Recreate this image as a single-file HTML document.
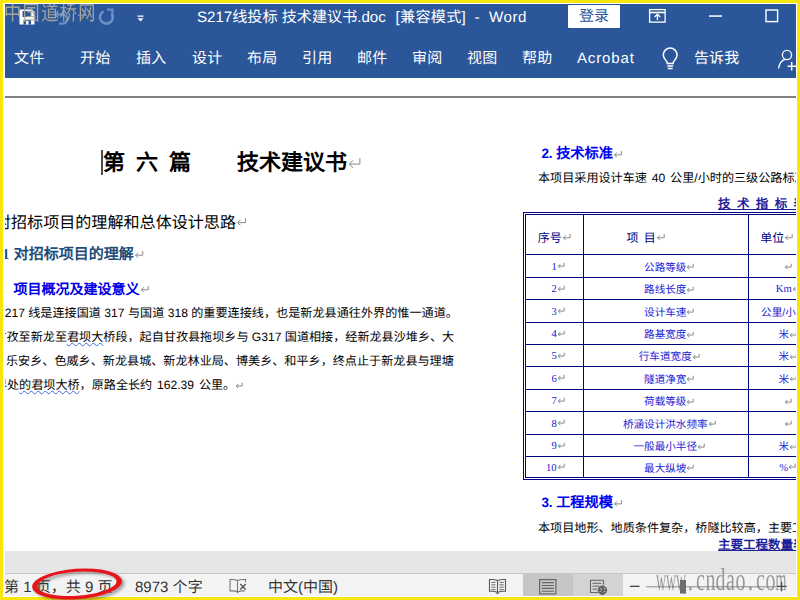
<!DOCTYPE html>
<html lang="zh-CN">
<head>
<meta charset="utf-8">
<title>S217线投标 技术建议书.doc [兼容模式] - Word</title>
<style>
html,body{margin:0;padding:0;}
body{text-rendering:geometricPrecision;width:800px;height:600px;overflow:hidden;background:#f8e50c;position:relative;font-family:"Liberation Sans",sans-serif;}
#frame{position:absolute;left:3px;top:3px;width:794px;height:594px;background:#fff;}
#win{position:absolute;left:0;top:0;width:800px;height:600px;clip-path:inset(4px 4px 4px 5px);overflow:hidden;}
#titlebar{position:absolute;left:0;top:0;width:800px;height:78px;background:#2b579a;}
.tab{position:absolute;top:49.3px;font-size:15px;line-height:20px;color:#fff;white-space:nowrap;}
#ttl{position:absolute;left:197px;top:7.7px;font-size:15.1px;line-height:20px;white-space:nowrap;color:#fff;}
#login{position:absolute;left:568px;top:5px;width:52px;height:23px;background:#fff;color:#2b579a;font-size:15px;line-height:23px;text-align:center;border-radius:1px;}
#rule{position:absolute;left:0;top:96px;width:800px;height:2px;background:#808080;}
.t{position:absolute;white-space:nowrap;color:#000;line-height:20px;height:20px;}
.j{text-align:justify;text-align-last:justify;}
.sf{font-weight:bold;}
.sr{font-family:"Liberation Serif",serif;}
.pm{display:inline-block;width:.69em;height:.69em;vertical-align:0;margin-left:0;overflow:visible;}
.bd{font-size:12.1px;}
.sq{text-decoration:underline wavy #3a6de0;text-decoration-thickness:1.3px;text-underline-offset:1.3px;text-decoration-skip-ink:none;}
.nv{color:#1f1f99;}
.sn{font-family:"Liberation Sans",sans-serif;font-size:13.5px;letter-spacing:-.3px;}
.ln{position:absolute;background:#000080;}
.c{position:absolute;white-space:nowrap;color:#1a1ad6;font-size:10.6px;line-height:14px;height:14px;text-align:center;}
.c .pm,.h .pm{width:.8em;height:.8em;}
.h{position:absolute;white-space:nowrap;color:#000080;font-size:12px;line-height:16px;height:16px;text-align:center;}
#hscroll{position:absolute;left:0;top:551px;width:800px;height:23px;background:#e6e6e6;}
#status{position:absolute;left:0;top:573px;width:800px;height:24px;background:#f3f3f3;border-top:1px solid #c8c8c8;box-sizing:border-box;}
.s{position:absolute;top:578.3px;font-size:15px;line-height:20px;color:#333;white-space:nowrap;}
#wm1{position:absolute;left:4px;top:.8px;letter-spacing:1.4px;font-size:17.2px;line-height:20px;height:20px;color:#b0ab9c;opacity:.9;white-space:nowrap;transform-origin:0 0;transform:scaleY(1.18);}
#wm2{position:absolute;left:655.5px;top:565px;font-family:"Liberation Serif",serif;font-size:20px;line-height:20px;height:20px;color:#707070;opacity:.68;white-space:nowrap;transform-origin:0 0;transform:scaleY(1.59);}
#wm2 span{display:inline-flex;justify-content:center;width:10px;}
#wm2 .n{transform:scaleX(.7);}
</style>
</head>
<body>
<svg width="0" height="0" style="position:absolute"><symbol id="pm" viewBox="0 0 10 10"><path d="M8.500 2v4h-7M4 3.500l-2.500 2.500 2.500 2.500" fill="none" stroke="#8a8a8a" stroke-width="1" vector-effect="non-scaling-stroke"/></symbol></svg>
<div id="frame"></div>
<div id="win">
  <div id="titlebar">
    <div id="ttl" class="j" style="width:330.1px">S217线投标 技术建议书.doc <span style="margin-left:5.5px;letter-spacing:.3px">[兼容模式]</span>&nbsp; -&nbsp; <span style="margin-left:1px;letter-spacing:.6px">Word</span></div>
    <div id="login">登录</div>
    <div class="tab j" style="left:14px;top:49.3px;width:30.2px;">文件</div>
    <div class="tab j" style="left:80px;top:49.3px;width:30.2px;">开始</div>
    <div class="tab j" style="left:136px;top:49.3px;width:30.2px;">插入</div>
    <div class="tab j" style="left:192px;top:49.3px;width:30.2px;">设计</div>
    <div class="tab j" style="left:247px;top:49.3px;width:30.2px;">布局</div>
    <div class="tab j" style="left:302px;top:49.3px;width:30.2px;">引用</div>
    <div class="tab j" style="left:357px;top:49.3px;width:30.2px;">邮件</div>
    <div class="tab j" style="left:412px;top:49.3px;width:30.2px;">审阅</div>
    <div class="tab j" style="left:467px;top:49.3px;width:30.2px;">视图</div>
    <div class="tab j" style="left:522px;top:49.3px;width:30.2px;">帮助</div>
    <div class="tab" style="left:577px;top:49.3px;letter-spacing:.85px">Acrobat</div>
    <div class="tab j" style="left:694px;top:49.3px;width:45.2px;">告诉我</div>
  </div>
  <div id="rule"></div>

  <!-- left page -->
  <div class="t sf" style="left:103px;top:153px;font-size:22px;">第</div>
  <div class="t sf" style="left:136px;top:153px;font-size:22px;">六</div>
  <div class="t sf" style="left:169px;top:153px;font-size:22px;">篇</div>
  <div class="t sf j" style="left:237px;top:153px;font-size:22px;width:125.3px;">技术建议书<svg class="pm" viewBox="0 0 10 10"><use href="#pm"/></svg></div>
  <div class="t j" style="left:-5.1px;top:212.5px;font-size:16.07px;width:252.2px;">对招标项目的理解和总体设计思路<svg class="pm" viewBox="0 0 10 10"><use href="#pm"/></svg></div>
  <div class="t sf j" style="left:2px;top:245px;font-size:15px;color:#1f4e79;width:142.2px;"><span class="sr">1</span> 对招标项目的理解<svg class="pm" viewBox="0 0 10 10"><use href="#pm"/></svg></div>
  <div class="t sf j" style="left:13.5px;top:279px;font-size:14px;color:#0000e6;width:135.8px;">项目概况及建设意义<svg class="pm" viewBox="0 0 10 10"><use href="#pm"/></svg></div>
  <div class="t bd j" style="left:-3.4px;top:303px;width:461.3px;">S217 线是连接国道 317 与国道 318 的重要连接线，也是新龙县通往外界的惟一通道。</div>
  <div class="t bd j" style="left:-5.6px;top:327px;width:459.8px;">甘孜至新龙至<span class="sq">君坝大</span>桥段，起自甘孜县拖坝乡与 G317 国道相接，经新龙县沙堆乡、大</div>
  <div class="t bd j" style="left:-6.1px;top:351px;width:459.9px;">、乐安乡、色威乡、新龙县城、新龙林业局、博美乡、和平乡，终点止于新龙县与理塘</div>
  <div class="t bd j" style="left:-5.1px;top:375px;width:248.7px;word-spacing:1.5px;">界处<span class="sq">的君坝大桥</span>，原路全长约 162.39 公里。<svg class="pm" viewBox="0 0 10 10"><use href="#pm"/></svg></div>

  <!-- right page -->
  <div class="t sf j" style="left:541.5px;top:144.3px;font-size:14.2px;color:#0000f0;width:81.3px;"><span class="sn">2.</span> 技术标准<svg class="pm" viewBox="0 0 10 10"><use href="#pm"/></svg></div>
  <div class="t bd j" style="left:538px;top:168px;width:268.6px;word-spacing:1.5px;">本项目采用设计车速 40 公里/小时的三级公路标准</div>
  <div class="t sf nv j" style="left:718px;top:194px;font-size:12.5px;width:88.1px;word-spacing:2.9px;text-decoration:underline;text-decoration-thickness:1.4px;text-underline-offset:1px;">技 术 指 标 表</div>

  <div class="ln" style="left:523px;top:212px;width:300px;height:1px"></div>
  <div class="ln" style="left:525px;top:214px;width:300px;height:1px"></div>
  <div class="ln" style="left:523px;top:212px;width:1px;height:268px"></div>
  <div class="ln" style="left:525px;top:214px;width:1px;height:264px"></div>
  <div class="ln" style="left:525px;top:477px;width:300px;height:1px"></div>
  <div class="ln" style="left:523px;top:479px;width:300px;height:1px"></div>
  <div class="ln" style="left:583px;top:214px;width:1px;height:264px"></div>
  <div class="ln" style="left:748px;top:214px;width:1px;height:264px"></div>
  <div class="ln" style="left:525px;top:254px;width:300px;height:1px"></div>
  <div class="ln" style="left:525px;top:277px;width:300px;height:1px"></div>
  <div class="ln" style="left:525px;top:299px;width:300px;height:1px"></div>
  <div class="ln" style="left:525px;top:322px;width:300px;height:1px"></div>
  <div class="ln" style="left:525px;top:344px;width:300px;height:1px"></div>
  <div class="ln" style="left:525px;top:366px;width:300px;height:1px"></div>
  <div class="ln" style="left:525px;top:389px;width:300px;height:1px"></div>
  <div class="ln" style="left:525px;top:411px;width:300px;height:1px"></div>
  <div class="ln" style="left:525px;top:434px;width:300px;height:1px"></div>
  <div class="ln" style="left:525px;top:456px;width:300px;height:1px"></div>

  <div class="h" style="left:526px;width:57px;top:230px;">序号<svg class="pm" viewBox="0 0 10 10"><use href="#pm"/></svg></div>
  <div class="h" style="left:584px;width:124px;top:230px;word-spacing:2px;">项 目<svg class="pm" viewBox="0 0 10 10"><use href="#pm"/></svg></div>
  <div class="h" style="left:749px;width:56px;top:230px;">单位<svg class="pm" viewBox="0 0 10 10"><use href="#pm"/></svg></div>

  <div class="c sr" style="left:526px;width:65px;top:260.7px;">1<svg class="pm" viewBox="0 0 10 10"><use href="#pm"/></svg></div>
  <div class="c" style="left:584px;width:171px;top:260.7px;">公路等级<svg class="pm" viewBox="0 0 10 10"><use href="#pm"/></svg></div>
  <div class="c" style="left:749px;width:78px;top:260.7px;"><svg class="pm" viewBox="0 0 10 10"><use href="#pm"/></svg></div>
  <div class="c sr" style="left:526px;width:65px;top:283.2px;">2<svg class="pm" viewBox="0 0 10 10"><use href="#pm"/></svg></div>
  <div class="c" style="left:584px;width:171px;top:283.2px;">路线长度<svg class="pm" viewBox="0 0 10 10"><use href="#pm"/></svg></div>
  <div class="c sr" style="left:749px;width:78px;top:283.2px;">Km<svg class="pm" viewBox="0 0 10 10"><use href="#pm"/></svg></div>
  <div class="c sr" style="left:526px;width:65px;top:305.7px;">3<svg class="pm" viewBox="0 0 10 10"><use href="#pm"/></svg></div>
  <div class="c" style="left:584px;width:171px;top:305.7px;">设计车速<svg class="pm" viewBox="0 0 10 10"><use href="#pm"/></svg></div>
  <div class="c" style="left:749px;width:78px;top:305.7px;">公里/小时<svg class="pm" viewBox="0 0 10 10"><use href="#pm"/></svg></div>
  <div class="c sr" style="left:526px;width:65px;top:328.2px;">4<svg class="pm" viewBox="0 0 10 10"><use href="#pm"/></svg></div>
  <div class="c" style="left:584px;width:171px;top:328.2px;">路基宽度<svg class="pm" viewBox="0 0 10 10"><use href="#pm"/></svg></div>
  <div class="c" style="left:749px;width:78px;top:328.2px;">米<svg class="pm" viewBox="0 0 10 10"><use href="#pm"/></svg></div>
  <div class="c sr" style="left:526px;width:65px;top:350.2px;">5<svg class="pm" viewBox="0 0 10 10"><use href="#pm"/></svg></div>
  <div class="c" style="left:584px;width:171px;top:350.2px;">行车道宽度<svg class="pm" viewBox="0 0 10 10"><use href="#pm"/></svg></div>
  <div class="c" style="left:749px;width:78px;top:350.2px;">米<svg class="pm" viewBox="0 0 10 10"><use href="#pm"/></svg></div>
  <div class="c sr" style="left:526px;width:65px;top:372.7px;">6<svg class="pm" viewBox="0 0 10 10"><use href="#pm"/></svg></div>
  <div class="c" style="left:584px;width:171px;top:372.7px;">隧道净宽<svg class="pm" viewBox="0 0 10 10"><use href="#pm"/></svg></div>
  <div class="c" style="left:749px;width:78px;top:372.7px;">米<svg class="pm" viewBox="0 0 10 10"><use href="#pm"/></svg></div>
  <div class="c sr" style="left:526px;width:65px;top:395.2px;">7<svg class="pm" viewBox="0 0 10 10"><use href="#pm"/></svg></div>
  <div class="c" style="left:584px;width:171px;top:395.2px;">荷载等级<svg class="pm" viewBox="0 0 10 10"><use href="#pm"/></svg></div>
  <div class="c" style="left:749px;width:78px;top:395.2px;"><svg class="pm" viewBox="0 0 10 10"><use href="#pm"/></svg></div>
  <div class="c sr" style="left:526px;width:65px;top:417.7px;">8<svg class="pm" viewBox="0 0 10 10"><use href="#pm"/></svg></div>
  <div class="c" style="left:584px;width:171px;top:417.7px;">桥涵设计洪水频率<svg class="pm" viewBox="0 0 10 10"><use href="#pm"/></svg></div>
  <div class="c" style="left:749px;width:78px;top:417.7px;"><svg class="pm" viewBox="0 0 10 10"><use href="#pm"/></svg></div>
  <div class="c sr" style="left:526px;width:65px;top:440.2px;">9<svg class="pm" viewBox="0 0 10 10"><use href="#pm"/></svg></div>
  <div class="c" style="left:584px;width:171px;top:440.2px;">一般最小半径<svg class="pm" viewBox="0 0 10 10"><use href="#pm"/></svg></div>
  <div class="c" style="left:749px;width:78px;top:440.2px;">米<svg class="pm" viewBox="0 0 10 10"><use href="#pm"/></svg></div>
  <div class="c sr" style="left:526px;width:59px;top:461.7px;">10<svg class="pm" viewBox="0 0 10 10"><use href="#pm"/></svg></div>
  <div class="c" style="left:584px;width:171px;top:461.7px;">最大纵坡<svg class="pm" viewBox="0 0 10 10"><use href="#pm"/></svg></div>
  <div class="c sr" style="left:749px;width:78px;top:461.7px;">%<svg class="pm" viewBox="0 0 10 10"><use href="#pm"/></svg></div>

  <div class="t sf j" style="left:541.5px;top:493.3px;font-size:14.2px;color:#0000f0;width:81.3px;"><span class="sn">3.</span> 工程规模<svg class="pm" viewBox="0 0 10 10"><use href="#pm"/></svg></div>
  <div class="t bd j" style="left:538px;top:518px;width:266.2px;">本项目地形、地质条件复杂，桥隧比较高，主要工</div>
  <div class="t sf nv j" style="left:718px;top:535.3px;font-size:12.5px;width:87.7px;text-decoration:underline;text-decoration-thickness:1.4px;text-underline-offset:1px;">主要工程数量表</div>

  <div id="hscroll"></div>
  <div id="status"></div>
  <!-- icons overlay -->
  <svg id="ico" width="800" height="600" viewBox="0 0 800 600" style="position:absolute;left:0;top:0">
    <!-- save -->
    <g>
      <path d="M19.5 9.5h12.5l2.5 2.5v12.5h-15z" fill="#fff"/>
      <rect x="22.5" y="11" width="8.5" height="6" fill="#2b579a"/>
      <rect x="23.5" y="20" width="7.5" height="4.5" fill="#2b579a"/>
      <rect x="26" y="21" width="2.5" height="3.5" fill="#fff"/>
    </g>
    <!-- undo (disabled) -->
    <g fill="none" stroke="#6a8dc6" stroke-width="2.300">
      <path d="M56 14.500h6.500a4.600 4.600 0 0 1 0 9.200h-3.500"/>
      <path d="M58.300 10l-4.300 4.500 4.300 4.500z" fill="#6a8dc6" stroke="none"/>
      <path d="M78 15.200h7" stroke-width="1.400"/>
    </g>
    <!-- redo (disabled) -->
    <g fill="none" stroke="#6a8dc6" stroke-width="2.700">
      <path d="M103.600 11.400A6.400 6.400 0 1 0 111.800 13.800"/>
      <path d="M107 9.600h5.400v5.600" stroke-width="2.300"/>
    </g>
    <!-- qat dropdown -->
    <rect x="137.500" y="15.500" width="6" height="1.300" fill="#fff"/>
    <path d="M137.500 18.300h6l-3 3.300z" fill="#fff"/>
    <!-- ribbon display options -->
    <g fill="none" stroke="#fff" stroke-width="1.300">
      <rect x="649.600" y="9.600" width="15.500" height="12.500"/>
      <path d="M649.600 12.500h15.500" stroke-width="1.600"/>
      <path d="M657.400 20v-5.500M654.600 17l2.800 -2.800 2.800 2.800"/>
    </g>
    <!-- minimize -->
    <rect x="709" y="15.300" width="13" height="1.500" fill="#fff"/>
    <!-- maximize -->
    <rect x="766" y="10" width="11.600" height="11.600" fill="none" stroke="#fff" stroke-width="1.400"/>
    <!-- lightbulb -->
    <g fill="none" stroke="#fff" stroke-width="1.500">
      <path d="M667.300 63.500c0 -3 -4 -4.500 -4 -8.500a6.900 6.900 0 0 1 13.800 0c0 4 -4 5.500 -4 8.500z"/>
      <path d="M667.300 66h5.800M667.800 68.500h4.800"/>
    </g>
    <!-- share person -->
    <g fill="none" stroke="#fff" stroke-width="1.300">
      <circle cx="787" cy="55" r="4.600"/>
      <path d="M778.600 68.500c0.500 -5 3.500 -8.300 6.500 -9.200"/>
      <path d="M787.500 66.300h8.500M791.700 62v8.500" stroke-width="1.500"/>
    </g>
    <!-- text cursor -->
    <rect x="101.300" y="150" width="1.400" height="25" fill="#000"/>

    <!-- status bar: proofing -->
    <g fill="none" stroke="#777" stroke-width="1.100">
      <path d="M237.500 580.500v12.700M237.500 580.500c-2.200 -1 -5 -1.200 -7.500 -.9v11.400c2.500 -.3 5.300 -.1 7.500 .9c2.200 -1 5 -1.200 7.500 -.9M237.500 580.500c2.200 -1 5 -1.200 8 -.9v2.500"/>
      <path d="M240.300 584l5.400 5.400M245.700 584l-5.400 5.400" stroke="#555" stroke-width="1.400"/>
    </g>
    <!-- view: read mode -->
    <g fill="none" stroke="#5a5a5a" stroke-width="1.100">
      <path d="M497.500 580.500v13.500M497.500 580.500c-2.200 -1 -5.200 -1.200 -8 -1v11.800c2.800 -0.200 5.800 0 8 1c2.200 -1 5.200 -1.200 8 -1v-11.800c-2.800 -0.200 -5.800 0 -8 1"/>
      <path d="M491.300 582.400h4.200M491.300 584.800h4.200M491.300 587.200h4.200M491.300 589.600h4.200M499.500 582.400h4.200M499.500 584.800h4.200M499.500 587.200h4.200M499.500 589.600h4.200" stroke-width=".9"/>
      <path d="M496 592.500l1.500 1.500 1.500 -1.500" stroke-width=".9"/>
    </g>
    <!-- view: print layout (selected) -->
    <rect x="523" y="574" width="50" height="23" fill="#c6c6c6"/>
    <rect x="573" y="574" width="50" height="23" fill="#d3d3d3"/>
    <g fill="none" stroke="#666" stroke-width="1.200">
      <rect x="539.600" y="579.600" width="16.300" height="14.300"/>
      <path d="M541.800 582.600h12M541.800 585.500h12M541.800 588.400h12M541.800 591.300h12" stroke-width="1.100"/>
    </g>
    <!-- view: web layout -->
    <g fill="none" stroke="#666" stroke-width="1.100">
      <path d="M598 592.500h-7.500v-12.300h13v4.500"/>
      <path d="M592.500 583.300h9M592.500 586.200h7M592.500 589.100h4.500" stroke-width="1"/>
      <circle cx="602.400" cy="590.200" r="4.300" fill="#5c5c5c" stroke="#5c5c5c" stroke-width=".8"/>
      <path d="M600 588.500c1 -.5 2 .5 1.500 1.500s-1.500 1 -1.500 2M604 587.500c-.5 1 .5 1.500 1.500 1.500M603.500 592.500c0 -1 1 -1.500 2 -1" stroke="#d0d0d0" stroke-width=".9"/>
    </g>
    <!-- zoom slider -->
    <rect x="630" y="585.700" width="9.500" height="1.300" fill="#444"/>
    <rect x="646" y="586.300" width="130" height="1" fill="#8a8a8a"/>
    <rect x="680" y="580" width="6" height="13.600" fill="#6e6e6e"/>
    <path d="M776.700 586.400h10M781.600 581.700v9.600" stroke="#444" stroke-width="1.300" fill="none"/>
  </svg>

  <div class="s j" style="left:4px;top:578.3px;width:108.5px;">第 1 页，共 9 页</div>
  <div class="s j" style="left:135px;top:578.3px;width:67.7px;">8973 个字</div>
  <div class="s j" style="left:268px;top:578.3px;width:70.1px;">中文(中国)</div>

  <div id="wm1">中国道桥网</div>
  <div id="wm2"><span class="n">w</span><span class="n">w</span><span class="n">w</span><span>.</span><span>c</span><span>n</span><span>d</span><span>a</span><span>o</span><span>.</span><span>c</span><span>o</span><span class="n">m</span></div>
</div>
<svg id="mark" width="800" height="600" viewBox="0 0 800 600" style="position:absolute;left:0;top:0">
  <defs><filter id="bl" x="-20%" y="-40%" width="140%" height="180%"><feGaussianBlur stdDeviation="1.400"/></filter></defs>
  <g transform="rotate(-4 77 584)">
    <path d="M34.500 586.200a45 15.200 0 1 0 90 0a45 15.200 0 1 0 -90 0zM39.800 586a39.700 12 0 1 1 79.400 0a39.700 12 0 1 1 -79.400 0z" fill="#444" fill-opacity=".5" fill-rule="evenodd" filter="url(#bl)"/>
    <path d="M32 584a45 15.200 0 1 0 90 0a45 15.200 0 1 0 -90 0zM37.300 583.800a39.700 12 0 1 1 79.400 0a39.700 12 0 1 1 -79.400 0z" fill="#e8131b" fill-rule="evenodd"/>
  </g>
</svg>
</body>
</html>
